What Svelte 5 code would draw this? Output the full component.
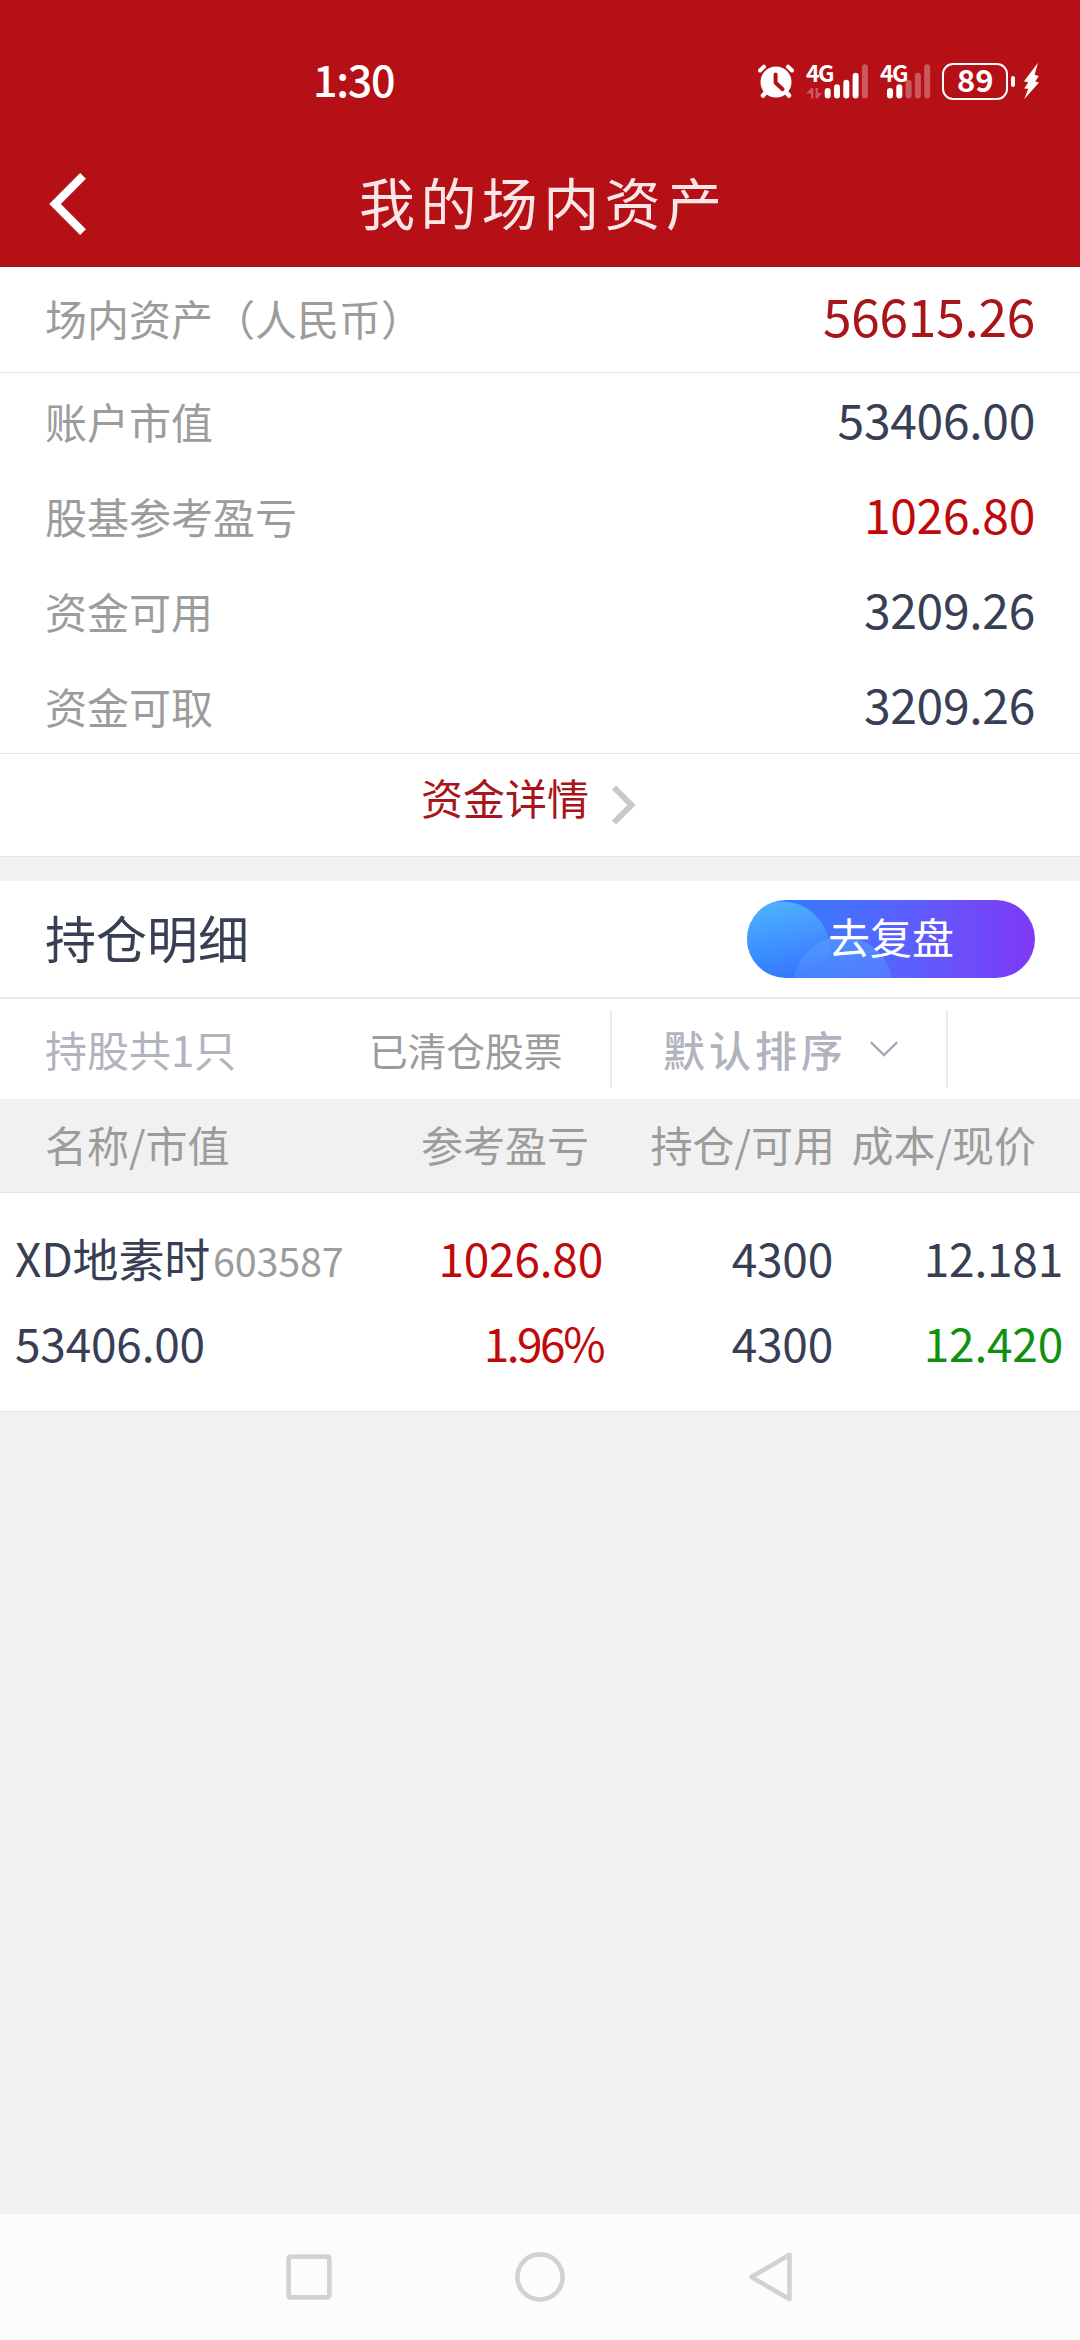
<script>
    // Account summary rows
    const summary = [
        { label: "账户市值", value: "53406.00" },
        { label: "股基参考盈亏", value: "1026.80", up: true },
        { label: "资金可用", value: "3209.26" },
        { label: "资金可取", value: "3209.26" },
    ];

    const headers = ["名称/市值", "参考盈亏", "持仓/可用", "成本/现价"];

    const holdings = [
        {
            name: "XD地素时",
            code: "603587",
            marketValue: "53406.00",
            profit: "1026.80",
            rate: "1.96%",
            amount: "4300",
            usable: "4300",
            cost: "12.181",
            price: "12.420",
        },
    ];

    // Signal bars: x offset, top and whether the bar is lit
    const BAR_X = [0, 9.3, 18.6, 27.9, 37.2];
    const BAR_TOP = [25, 21.3, 16.7, 9.7, 1.3];
    const signals = [
        { level: 4, arrows: true, start: 21.7 },
        { level: 2, arrows: false, start: 10 },
    ];
</script>

<div class="page">
    <header>
        <div class="status">
            <span class="time">1:30</span>
            <svg class="alarm" width="36" height="36" viewBox="0 0 36 36">
                <g stroke="#fff" stroke-linecap="round" fill="none">
                    <path d="M2 7.5 6 3.7M34 7.5 30 3.7" stroke-width="4" />
                    <path d="M8 29 5 32.5M28 29 31 32.5" stroke-width="4.5" />
                </g>
                <circle cx="18" cy="19" r="15.5" fill="#fff" />
                <path
                    d="M17.6 11.5v8.2l7 6.5"
                    fill="none"
                    stroke="#b51016"
                    stroke-width="4"
                    stroke-linecap="round"
                    stroke-linejoin="round"
                />
            </svg>
            {#each signals as signal}
                <svg
                    class="signal"
                    width={signal.start + 40.3}
                    height="36"
                    viewBox="0 0 {signal.start + 40.3} 36"
                >
                    <text x="0" y="19">4G</text>
                    {#if signal.arrows}
                        <path
                            class="faded"
                            d="M5 25v10.5h2.4V25zM5.4 25 0 30.5h5.4zM9.5 25v10.5H12V25zM11.5 35.5 16 30h-4.5z"
                        />
                    {/if}
                    {#each BAR_X as x, b}
                        <rect
                            class:faded={b >= signal.level}
                            x={signal.start + x - 3}
                            y={BAR_TOP[b]}
                            width="6"
                            height={35.5 - BAR_TOP[b]}
                            rx="3"
                        />
                    {/each}
                </svg>
            {/each}
            <div class="battery">89</div>
            <div class="battery-tip"></div>
            <svg class="bolt" width="17" height="38" viewBox="0 0 17 38">
                <path
                    d="M15 .8 1 19.2 5.3 20.6 1.2 26.5 5.2 26.8 1.2 37.2 16 20.4 12.2 19.6 15.8 14 11.6 12.7Z"
                    fill="#fff"
                />
            </svg>
        </div>
        <div class="title-bar">
            <svg class="back" width="38" height="64" viewBox="0 0 38 64">
                <path
                    d="M34 3.8 6 32l28 28.2"
                    fill="none"
                    stroke="#fff"
                    stroke-width="8.2"
                />
            </svg>
            <h1>我的场内资产</h1>
        </div>
    </header>

    <section class="assets">
        <div class="row total">
            <span class="label">场内资产（人民币）</span>
            <span class="value">56615.26</span>
        </div>
        {#each summary as item}
            <div class="row">
                <span class="label">{item.label}</span>
                <span class="value" class:up={item.up}>{item.value}</span>
            </div>
        {/each}
        <div class="detail">
            <span>资金详情</span>
            <svg width="26" height="42" viewBox="0 0 26 42">
                <path
                    d="M3 3.5 20.5 21 3 38.5"
                    fill="none"
                    stroke="#c8c8cd"
                    stroke-width="6"
                />
            </svg>
        </div>
    </section>

    <section class="positions">
        <div class="section-title">
            <h2>持仓明细</h2>
            <button>
                <svg width="288" height="78" viewBox="0 0 288 78">
                    <defs>
                        <linearGradient id="bg">
                            <stop offset="0" stop-color="#2d7cff" />
                            <stop offset="0.3" stop-color="#4273ff" />
                            <stop offset="0.6" stop-color="#5f5cfd" />
                            <stop offset="1" stop-color="#7f38f5" />
                        </linearGradient>
                        <linearGradient id="orb" x1="0.3" y1="0" x2="0.5" y2="1">
                            <stop offset="0" stop-color="#4db4ff" />
                            <stop offset="0.8" stop-color="#4db4ff" stop-opacity="0" />
                        </linearGradient>
                        <linearGradient id="orb2" x1="0" y1="0" x2="0" y2="0.5">
                            <stop offset="0" stop-color="#58a0ff" stop-opacity="0.6" />
                            <stop offset="1" stop-color="#5a9aff" stop-opacity="0.3" />
                        </linearGradient>
                    </defs>
                    <rect width="288" height="78" fill="url(#bg)" />
                    <circle cx="35" cy="49" r="47.5" fill="url(#orb)" />
                    <circle cx="96" cy="87" r="50" fill="url(#orb2)" />
                </svg>
                <span>去复盘</span>
            </button>
        </div>

        <div class="toolbar">
            <span class="count">持股共1只</span>
            <span class="cleared">已清仓股票</span>
            <div class="sort">
                <span>默认排序</span>
                <svg width="28" height="16" viewBox="0 0 28 16">
                    <path
                        d="M1.5 1.8 14 14 26.5 1.8"
                        fill="none"
                        stroke="#a3aabb"
                        stroke-width="2.4"
                        stroke-linecap="round"
                    />
                </svg>
            </div>
        </div>

        <div class="table-head">
            {#each headers as header}
                <span>{header}</span>
            {/each}
        </div>

        {#each holdings as stock}
            <div class="holding">
                <div class="cell name">
                    <span>{stock.name}<small>{stock.code}</small></span>
                    <span>{stock.marketValue}</span>
                </div>
                <div class="cell up">
                    <span>{stock.profit}</span>
                    <span class="rate">{stock.rate}</span>
                </div>
                <div class="cell">
                    <span>{stock.amount}</span>
                    <span>{stock.usable}</span>
                </div>
                <div class="cell">
                    <span>{stock.cost}</span>
                    <span class="down">{stock.price}</span>
                </div>
            </div>
        {/each}
    </section>

    <nav>
        <svg width="50" height="50" viewBox="0 0 50 50">
            <rect x="4.6" y="4.6" width="40.8" height="40.8" rx="2" />
        </svg>
        <svg width="50" height="50" viewBox="0 0 50 50">
            <circle cx="25" cy="25" r="22.6" />
        </svg>
        <svg width="50" height="50" viewBox="0 0 50 50">
            <path d="M43.5 2.8 5.5 25l38 22.2z" />
        </svg>
    </nav>
</div>

<style>
    :global(body) {
        margin: 0;
        background: #f1f1f1;
    }

    .page {
        display: flex;
        flex-direction: column;
        width: 1080px;
        height: 2340px;
        background: #f1f1f1;
        color: #383e54;
        font-family: "Noto Sans CJK SC", sans-serif;
        font-size: 42px;
        line-height: 1;
        white-space: nowrap;
    }

    /* Header */
    header {
        box-sizing: border-box;
        height: 267px;
        background: #b51016;
        border-bottom: 1px solid #8a1c22;
        color: #fff;
    }

    .status {
        display: flex;
        align-items: center;
        box-sizing: border-box;
        height: 136px;
        padding: 26px 0 0 313px;
    }

    .time {
        width: 445px;
        margin-bottom: 6px;
        font-size: 43px;
        font-weight: 500;
        letter-spacing: -1.3px;
    }

    .signal {
        margin-left: 12px;
        fill: #fff;
        overflow: visible;
    }

    .signal text {
        font-family: "Noto Sans CJK SC", sans-serif;
        font-size: 23px;
        font-weight: 700;
        letter-spacing: -1.5px;
    }

    .faded {
        opacity: 0.3;
    }

    .battery {
        box-sizing: border-box;
        width: 66px;
        height: 37px;
        margin-left: 12px;
        border: 2.6px solid #fff;
        border-radius: 11px;
        font-size: 31px;
        font-weight: 700;
        line-height: 28px;
        text-align: center;
    }

    .battery-tip {
        width: 4px;
        height: 11px;
        margin: 0 8px 0 3px;
        border-radius: 2px;
        background: #fff;
    }

    .title-bar {
        display: flex;
        align-items: center;
        height: 131px;
        padding-left: 49px;
    }

    .back {
        margin-top: 5px;
    }

    h1 {
        margin: 0 0 2px 272px;
        color: #fae6e7;
        font-size: 56px;
        font-weight: 400;
        letter-spacing: 5.4px;
    }

    /* Account summary */
    .assets {
        background: #fff;
        border-bottom: 1px solid #e3e3e3;
    }

    .row {
        display: flex;
        align-items: center;
        justify-content: space-between;
        height: 95px;
        padding: 0 45px;
    }

    .label {
        color: #9c9c9c;
    }

    .value {
        margin-bottom: 5px;
        font-size: 48px;
        letter-spacing: -0.3px;
    }

    .total {
        height: 105px;
        border-bottom: 1px solid #e3e3e3;
    }

    .total .label {
        margin-bottom: 4px;
    }

    .total .value {
        margin-bottom: 10px;
        color: #a8151b;
        font-size: 51.5px;
    }

    .value.up,
    .up {
        color: #c00a0a;
    }

    .detail {
        display: flex;
        align-items: center;
        gap: 22px;
        height: 102px;
        padding-left: 421px;
        border-top: 1px solid #e3e3e3;
        color: #a8151b;
    }

    .detail span {
        margin-bottom: 17px;
    }

    /* Positions */
    .positions {
        margin-top: 24px;
        background: #fff;
        border-bottom: 1px solid #e3e3e3;
    }

    .section-title {
        display: flex;
        align-items: center;
        justify-content: space-between;
        height: 116px;
        padding: 0 45px;
        border-bottom: 2px solid #e8ecec;
    }

    h2 {
        margin: 0 0 3px;
        font-size: 51px;
        font-weight: 400;
    }

    button {
        position: relative;
        width: 288px;
        height: 78px;
        padding: 0;
        border: none;
        border-radius: 39px;
        overflow: hidden;
        background: none;
        color: #fff;
        font: inherit;
        font-size: 42px;
    }

    button svg {
        display: block;
    }

    button span {
        position: absolute;
        inset: 0;
        line-height: 72px;
    }

    .toolbar {
        display: flex;
        align-items: center;
        height: 100px;
        padding-left: 45px;
        color: #b1b3bf;
    }

    .count {
        width: 324px;
    }

    .cleared {
        width: 241px;
        color: #9c9c9c;
        font-size: 38.7px;
    }

    .sort {
        display: flex;
        align-items: center;
        box-sizing: border-box;
        width: 338px;
        height: 78px;
        padding-left: 51px;
        border-left: 2px solid #e6edf0;
        border-right: 2px solid #e6edf0;
        font-weight: 500;
    }

    .sort span {
        width: 207px;
        letter-spacing: 4px;
    }

    .table-head,
    .holding {
        display: grid;
        text-align: right;
    }

    .table-head {
        grid-template-columns: 376px 167px 247px 201px;
        align-items: center;
        box-sizing: border-box;
        height: 94px;
        padding: 0 0 3px 45px;
        background: #f1f1f1;
        border-bottom: 1px solid #e3e3e3;
        color: #9c9c9c;
    }

    .table-head span:first-child {
        text-align: left;
    }

    .holding {
        grid-template-columns: 400px 188px 230px 230px;
        box-sizing: border-box;
        height: 218px;
        padding: 22px 0 0 15px;
        font-size: 46px;
        line-height: 85px;
        letter-spacing: -0.2px;
    }

    .cell {
        display: flex;
        flex-direction: column;
    }

    .cell > span {
        height: 85px;
    }

    .name {
        text-align: left;
    }

    .name small {
        margin-left: 3px;
        color: #9c9c9c;
        font-size: 39.5px;
        line-height: 1;
    }

    .rate {
        letter-spacing: -2.5px;
    }

    .down {
        color: #109010;
    }

    /* System navigation */
    nav {
        display: flex;
        align-items: center;
        gap: 181px;
        box-sizing: border-box;
        height: 126px;
        margin-top: auto;
        padding-left: 284px;
        background: #fcfcfc;
    }

    nav svg {
        fill: none;
        stroke: #d2d2d2;
        stroke-width: 4.6;
        stroke-linejoin: round;
    }
</style>
